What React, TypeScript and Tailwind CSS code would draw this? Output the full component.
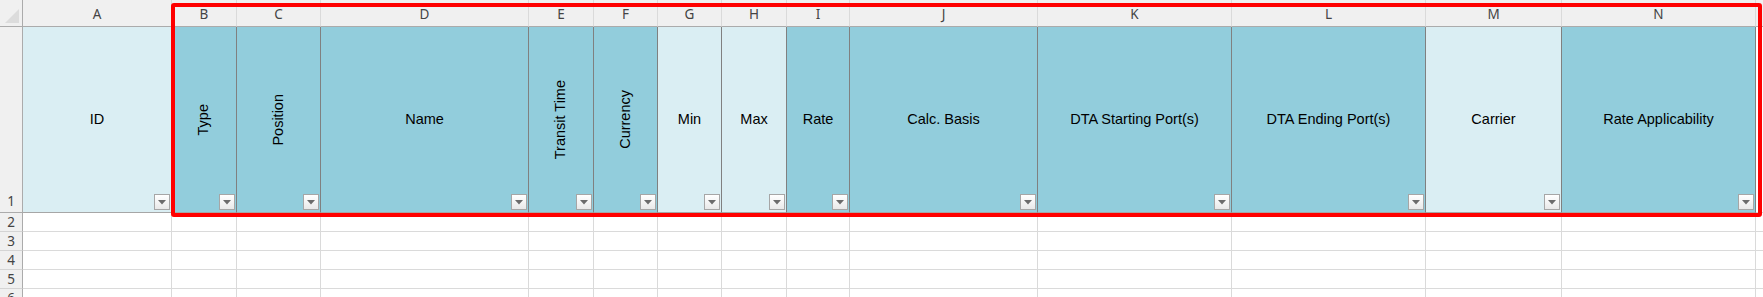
import React from "react";

type Col = { letter: string; w: number; label: string; light?: boolean; vertical?: boolean };

const cols: Col[] = [
  { letter: "A", w: 149, label: "ID", light: true },
  { letter: "B", w: 65, label: "Type", vertical: true },
  { letter: "C", w: 84, label: "Position", vertical: true },
  { letter: "D", w: 208, label: "Name" },
  { letter: "E", w: 65, label: "Transit Time", vertical: true },
  { letter: "F", w: 64, label: "Currency", vertical: true },
  { letter: "G", w: 64, label: "Min", light: true },
  { letter: "H", w: 65, label: "Max", light: true },
  { letter: "I", w: 63, label: "Rate" },
  { letter: "J", w: 188, label: "Calc. Basis" },
  { letter: "K", w: 194, label: "DTA Starting Port(s)" },
  { letter: "L", w: 194, label: "DTA Ending Port(s)" },
  { letter: "M", w: 136, label: "Carrier", light: true },
  { letter: "N", w: 194, label: "Rate Applicability" },
];

const font = { fontFamily: '"Liberation Sans", Arial, sans-serif' };
const hdrFont = { fontFamily: '"Noto Sans", "Liberation Sans", sans-serif' };

function FilterButton() {
  return (
    <div className="absolute bottom-[2px] right-[1px] w-[16px] h-[16px] border border-[#a6a6a6] bg-gradient-to-b from-white to-[#e9e9e9] flex items-center justify-center">
      <svg width="8" height="5" viewBox="0 0 8 5">
        <polygon points="0,0 8,0 4,4.5" fill="#6b6b6b" />
      </svg>
    </div>
  );
}

export default function App() {
  const template = `23px ${cols.map((c) => c.w + "px").join(" ")} 7px`;
  const bodyRows = [2, 3, 4, 5, 6];
  return (
    <div className="relative w-[1763px] h-[297px] overflow-hidden bg-white" style={font}>
      <div className="grid" style={{ gridTemplateColumns: template, gridTemplateRows: "27px 186px 19px 19px 19px 19px 19px" }}>
        {/* header row */}
        <div className="bg-[#f0f0f0] border-r border-b border-[#ababab] relative">
          <svg className="absolute right-[3px] bottom-[3px]" width="14" height="14" viewBox="0 0 14 14">
            <polygon points="14,0 14,14 0,14" fill="#dcdcdc" />
          </svg>
        </div>
        {cols.map((c) => (
          <div
            key={c.letter}
            className="bg-[#f0f0f0] border-r border-r-[#dadada] border-b border-b-[#ababab] flex items-center justify-center text-[13.5px] text-[#444] pt-[3px]"
            style={hdrFont}
          >
            {c.letter}
          </div>
        ))}
        <div className="bg-[#f0f0f0] border-b border-[#ababab]" />

        {/* row 1 */}
        <div className="bg-[#f0f0f0] border-r border-r-[#ababab] border-b border-b-[#ababab] flex items-end justify-center text-[13.5px] text-[#444] pb-[1px]" style={hdrFont}>
          1
        </div>
        {cols.map((c) => (
          <div
            key={c.letter}
            className={`relative border-r border-r-[#808080] border-b border-b-[#a6a6a6] flex items-center justify-center text-[14.5px] text-black ${
              c.light ? "bg-[#daeef3]" : "bg-[#92cddc]"
            }`}
          >
            {c.vertical ? (
              <span className="[writing-mode:vertical-rl] rotate-180 whitespace-nowrap">{c.label}</span>
            ) : (
              <span className="whitespace-nowrap">{c.label}</span>
            )}
            <FilterButton />
          </div>
        ))}
        <div className="border-b border-[#d4d4d4]" />

        {/* body rows */}
        {bodyRows.map((r) => (
          <React.Fragment key={r}>
            <div className="bg-[#f0f0f0] border-r border-r-[#ababab] border-b border-b-[#d4d4d4] flex items-start justify-center pt-[2px] text-[13.5px] text-[#444] leading-[14px]" style={hdrFont}>
              {r}
            </div>
            {cols.map((c) => (
              <div key={c.letter} className="bg-white border-r border-b border-[#dadada]" />
            ))}
            <div className="bg-white border-b border-[#dadada]" />
          </React.Fragment>
        ))}
      </div>

      {/* red highlight frame */}
      <div className="absolute left-[171px] top-[3px] w-[1591px] h-[214px] border-[4px] border-[#ff0000] rounded-[3px] pointer-events-none" />
    </div>
  );
}
